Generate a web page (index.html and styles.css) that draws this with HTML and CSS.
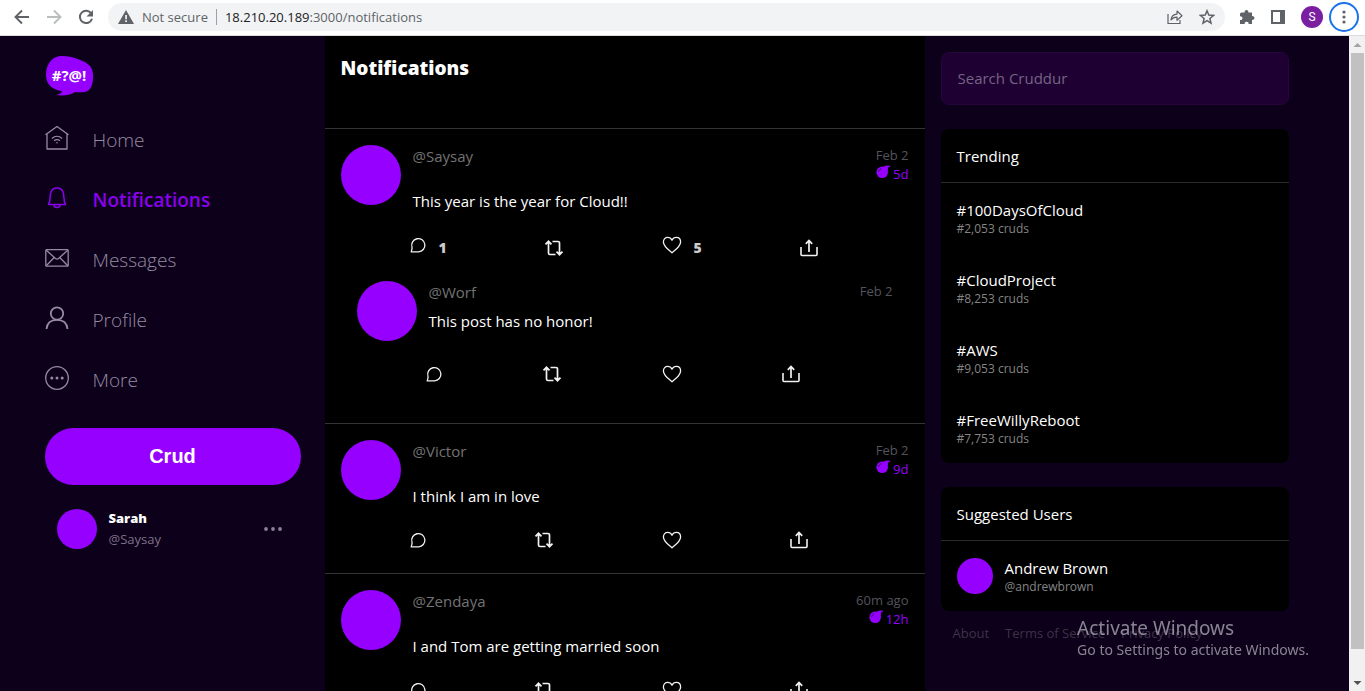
FILE: index.html
```html
<!DOCTYPE html>
<html lang="en">
<head>
<meta charset="utf-8">
<title>Cruddur</title>
<link rel="stylesheet" href="styles.css">
</head>
<body>
<svg class="sprite" aria-hidden="true">
  <symbol id="i-reply" viewBox="0 0 18 18"><path d="M2.200 15.800h7.300A6.600 6.600 0 1 0 3 11.200c.3 1.600-.1 3.200-.8 4.600z" fill="none" stroke="currentColor" stroke-width="1.300" stroke-linejoin="round"/></symbol>
  <symbol id="i-repost" viewBox="0 0 20 20"><path d="M1.500 6.300 4.500 3.300l3 3M4.500 3.500v11.500a1.500 1.500 0 0 0 1.500 1.500h5.500M8.500 3.500H14A1.500 1.500 0 0 1 15.500 5v11.500M12.500 13.700l3 3 3-3" fill="none" stroke="currentColor" stroke-width="1.700"/></symbol>
  <symbol id="i-heart" viewBox="0 0 20 20"><path d="M10 17.800C6.500 14.800 1.400 11.200 1.400 6.900c0-2.700 1.900-4.500 4.300-4.500 1.900 0 3.400 1 4.300 2.800.9-1.800 2.400-2.800 4.300-2.800 2.400 0 4.300 1.800 4.300 4.500 0 4.300-5.100 7.900-8.600 10.900z" fill="none" stroke="currentColor" stroke-width="1.300" stroke-linejoin="round"/></symbol>
  <symbol id="i-share" viewBox="0 0 20 20"><path d="M2 9v7.500a1 1 0 0 0 1 1h14a1 1 0 0 0 1-1V9" fill="none" stroke="currentColor" stroke-width="1.600"/><path d="M10 14V3M6.800 5.800 10 2.500l3.200 3.300" fill="none" stroke="currentColor" stroke-width="1.700"/></symbol>
  <symbol id="i-bomb" viewBox="0 0 14 14"><circle cx="6.200" cy="7.300" r="5.800" fill="currentColor"/><path d="M7.500 1.500 11 .5l3 .300-.4 1.400-1.700.1.100 3.700z" fill="currentColor"/><path d="M2.600 7C2.900 5.200 4 4.200 5.500 3.800" fill="none" stroke="#000" stroke-width=".6"/></symbol>
</svg>

<header class="browser">
  <button class="tool" aria-label="Back"><svg width="16" height="16" viewBox="0 0 16 16"><path d="M15 8H2M8 1.500 1.500 8 8 14.500" fill="none" stroke="#5f6368" stroke-width="1.900"/></svg></button>
  <button class="tool" aria-label="Forward"><svg width="16" height="16" viewBox="0 0 16 16"><path d="M1 8h13M8 1.500 14.500 8 8 14.500" fill="none" stroke="#babcbe" stroke-width="1.900"/></svg></button>
  <button class="tool" aria-label="Reload"><svg width="16" height="16" viewBox="0 0 16 16"><path d="M13.300 4.500A6.200 6.200 0 1 0 14 9.800" fill="none" stroke="#5f6368" stroke-width="2"/><path d="M15 1v6.500H8.500z" fill="#5f6368"/></svg></button>
  <div class="address">
    <svg width="16" height="14" viewBox="0 0 16 14"><path d="M8 0l8 14H0z" fill="#5f6368"/><path d="M7.200 5h1.700v4.200H7.200zM7.200 10.300h1.700V12H7.200z" fill="#f1f3f4"/></svg>
    <span class="secure">Not secure</span>
    <span class="url"><b class="host">18.210.20.189</b>:3000/notifications</span>
    <button class="tool" aria-label="Share this page"><svg width="16" height="16" viewBox="0 0 16 16"><path d="M1 5v9.500h12V11" fill="none" stroke="#5f6368" stroke-width="1.200"/><path d="M4 11c.4-4 2.500-5.700 6-5.900V2l5 4.700-5 4.600V8.200C7.500 8.100 5.500 9 4 11z" fill="none" stroke="#5f6368" stroke-width="1.200" stroke-linejoin="round"/></svg></button>
    <button class="tool" aria-label="Bookmark"><svg width="16" height="16" viewBox="0 0 16 16"><path d="M8 1.800l1.800 4.300 4.700.4-3.600 3 1.100 4.600L8 11.700l-4 2.400 1.100-4.600-3.600-3 4.700-.4z" fill="none" stroke="#5f6368" stroke-width="1.500"/></svg></button>
  </div>
  <button class="tool" aria-label="Extensions"><svg width="16" height="16" viewBox="0 0 16 16"><path d="M2.500 3.500h3.200a1.900 1.900 0 1 1 3.600 0H13v3.700a1.900 1.900 0 1 1 0 3.600V15H9.500a1.900 1.900 0 1 0-3.700 0H1v-4a1.900 1.900 0 1 0 0-3.600V5a1.500 1.500 0 0 1 1.500-1.500z" fill="#5f6368"/></svg></button>
  <button class="tool" aria-label="Side panel"><svg width="14" height="14" viewBox="0 0 14 14"><path d="M1 1h12v12H1z" fill="none" stroke="#5f6368" stroke-width="2"/><path d="M9 1h4v12H9z" fill="#5f6368"/></svg></button>
  <button class="account" aria-label="Account">S</button>
  <button class="menu" aria-label="Menu"><svg width="4" height="14" viewBox="0 0 4 14" fill="#5f6368"><circle cx="2" cy="2" r="1.600"/><circle cx="2" cy="7" r="1.600"/><circle cx="2" cy="12" r="1.600"/></svg></button>
</header>

<div class="viewport">
  <div class="page">
    <nav class="sidebar">
      <svg class="logo" width="50" height="42" viewBox="0 0 50 42" role="img" aria-label="Cruddur"><path d="M1 20C1 8 8 1 17 1c10 0 24 5 28 10 4 5 4 15 1 21-2 5-8 6-16 5-4 3-11 4-19 3 4-1 6-2 6-4C7 35 1 29 1 20z" fill="#9500ff"/><text x="24" y="26" class="logo-text">#?@!</text></svg>
      <div class="links">
        <a class="link" href="#"><svg width="24" height="26" viewBox="0 0 24 26" fill="none" stroke="currentColor" stroke-width="1.300"><path d="M.5 9.800 12 1.500l11.500 8.300M2 9v15h20V9" stroke-linejoin="round"/><path d="M7 13.500c3-2.800 7-2.800 10 0M9 15.800c2-1.600 4-1.600 6 0"/><circle cx="12" cy="17.700" r=".8" fill="currentColor" stroke="none"/></svg><span>Home</span></a>
        <a class="link link-active" href="#"><svg width="24" height="26" viewBox="0 0 24 26" fill="none" stroke="currentColor" stroke-width="1.500"><path d="M3.500 19.500C6 15 4.500 11 5.800 7.500 6.800 4.500 9 3 12 3s5.200 1.500 6.200 4.500c1.300 3.500-.2 7.500 2.300 12z" stroke-linejoin="round"/><path d="M9 20c0 3.200 6 3.200 6 0"/></svg><span>Notifications</span></a>
        <a class="link" href="#"><svg width="24" height="26" viewBox="0 0 24 26" fill="none" stroke="currentColor" stroke-width="1.300"><rect x=".8" y="4.700" width="22.400" height="16.500" rx="1"/><path d="M1 5l9.500 8.500c1 .8 2 .8 3 0L23 5M1 21l8.200-8.500M23 21l-8.200-8.500"/></svg><span>Messages</span></a>
        <a class="link" href="#"><svg width="24" height="26" viewBox="0 0 24 26" fill="none" stroke="currentColor" stroke-width="1.800"><circle cx="12" cy="8.500" r="6.200"/><path d="M1.500 24C2 18 6 14.800 12 14.800S22 18 22.500 24"/></svg><span>Profile</span></a>
        <a class="link" href="#"><svg width="24" height="26" viewBox="0 0 24 26" fill="none" stroke="currentColor" stroke-width="1.300"><circle cx="12" cy="13" r="11.300"/><g fill="currentColor" stroke="none"><circle cx="6.800" cy="13" r="1.500"/><circle cx="12" cy="13" r="1.500"/><circle cx="17.200" cy="13" r="1.500"/></g></svg><span>More</span></a>
      </div>
      <button class="crud">Crud</button>
      <div class="profile">
        <div class="avatar avatar-m"></div>
        <div class="who"><strong>Sarah</strong><span>@Saysay</span></div>
        <button class="more" aria-label="Account options"><svg width="20" height="6" viewBox="0 0 20 6" fill="#8b7f99"><circle cx="3" cy="3" r="1.900"/><circle cx="10" cy="3" r="1.900"/><circle cx="17" cy="3" r="1.900"/></svg></button>
      </div>
    </nav>

    <main class="feed">
      <h1 class="feed-title">Notifications</h1>

      <article class="activity">
        <div class="post">
          <div class="avatar"></div>
          <div class="body">
            <div class="meta"><a class="handle" href="#">@Saysay</a><div class="times"><span>Feb 2</span><span class="expires"><svg width="14" height="14"><use href="#i-bomb"/></svg>5d</span></div></div>
            <p class="message">This year is the year for Cloud!!</p>
          </div>
        </div>
        <div class="actions actions-counted">
          <button class="action counted" aria-label="Reply"><svg width="18" height="18"><use href="#i-reply"/></svg><span>1</span></button>
          <button class="action" aria-label="Repost"><svg width="20" height="20"><use href="#i-repost"/></svg></button>
          <button class="action counted" aria-label="Like"><svg width="20" height="20"><use href="#i-heart"/></svg><span>5</span></button>
          <button class="action" aria-label="Share"><svg width="20" height="20"><use href="#i-share"/></svg></button>
        </div>
        <div class="replies">
          <div class="post">
            <div class="avatar"></div>
            <div class="body">
              <div class="meta"><a class="handle" href="#">@Worf</a><div class="times"><span>Feb 2</span></div></div>
              <p class="message">This post has no honor!</p>
            </div>
          </div>
          <div class="actions">
            <button class="action" aria-label="Reply"><svg width="18" height="18"><use href="#i-reply"/></svg></button>
            <button class="action" aria-label="Repost"><svg width="20" height="20"><use href="#i-repost"/></svg></button>
            <button class="action" aria-label="Like"><svg width="20" height="20"><use href="#i-heart"/></svg></button>
            <button class="action" aria-label="Share"><svg width="20" height="20"><use href="#i-share"/></svg></button>
          </div>
        </div>
      </article>

      <article class="activity">
        <div class="post">
          <div class="avatar"></div>
          <div class="body">
            <div class="meta"><a class="handle" href="#">@Victor</a><div class="times"><span>Feb 2</span><span class="expires"><svg width="14" height="14"><use href="#i-bomb"/></svg>9d</span></div></div>
            <p class="message">I think I am in love</p>
          </div>
        </div>
        <div class="actions">
          <button class="action" aria-label="Reply"><svg width="18" height="18"><use href="#i-reply"/></svg></button>
          <button class="action" aria-label="Repost"><svg width="20" height="20"><use href="#i-repost"/></svg></button>
          <button class="action" aria-label="Like"><svg width="20" height="20"><use href="#i-heart"/></svg></button>
          <button class="action" aria-label="Share"><svg width="20" height="20"><use href="#i-share"/></svg></button>
        </div>
      </article>

      <article class="activity">
        <div class="post">
          <div class="avatar"></div>
          <div class="body">
            <div class="meta"><a class="handle" href="#">@Zendaya</a><div class="times"><span>60m ago</span><span class="expires"><svg width="14" height="14"><use href="#i-bomb"/></svg>12h</span></div></div>
            <p class="message">I and Tom are getting married soon</p>
          </div>
        </div>
        <div class="actions">
          <button class="action" aria-label="Reply"><svg width="18" height="18"><use href="#i-reply"/></svg></button>
          <button class="action" aria-label="Repost"><svg width="20" height="20"><use href="#i-repost"/></svg></button>
          <button class="action" aria-label="Like"><svg width="20" height="20"><use href="#i-heart"/></svg></button>
          <button class="action" aria-label="Share"><svg width="20" height="20"><use href="#i-share"/></svg></button>
        </div>
      </article>
    </main>

    <aside class="aside">
      <input class="search" type="text" placeholder="Search Cruddur" aria-label="Search Cruddur">
      <section class="card">
        <h2 class="card-title">Trending</h2>
        <a class="trend" href="#"><span>#100DaysOfCloud</span><small>#2,053 cruds</small></a>
        <a class="trend" href="#"><span>#CloudProject</span><small>#8,253 cruds</small></a>
        <a class="trend" href="#"><span>#AWS</span><small>#9,053 cruds</small></a>
        <a class="trend" href="#"><span>#FreeWillyReboot</span><small>#7,753 cruds</small></a>
      </section>
      <section class="card">
        <h2 class="card-title">Suggested Users</h2>
        <a class="user" href="#"><div class="avatar avatar-s"></div><div class="user-text"><span>Andrew Brown</span><small>@andrewbrown</small></div></a>
      </section>
      <footer class="legal"><a href="#">About</a><a href="#">Terms of Service</a><a href="#">Privacy Policy</a></footer>
    </aside>
  </div>

  <div class="scrollbar" aria-hidden="true">
    <svg width="16" height="17" viewBox="0 0 16 17"><path d="M8.500 7l4 4h-8z" fill="#a3a3a3"/></svg>
    <div class="track"><div class="thumb"></div></div>
    <svg width="16" height="17" viewBox="0 0 16 17"><path d="M8.500 11l-4-4h8z" fill="#505050"/></svg>
  </div>
</div>

<div class="watermark"><div class="watermark-title">Activate Windows</div><div>Go to Settings to activate Windows.</div></div>
</body>
</html>
```
FILE: styles.css
```css
* { box-sizing: border-box; }
body {
  margin: 0;
  height: 100vh;
  display: flex;
  flex-direction: column;
  overflow: hidden;
  background: #0d001a;
  color: #fff;
  font: 400 15px/22px "Open Sans", "Noto Sans", sans-serif;
}
button { border: 0; padding: 0; background: none; color: inherit; font: inherit; cursor: pointer; }
a { color: inherit; text-decoration: none; }
svg { display: block; flex: none; }
.sprite { position: absolute; width: 0; height: 0; }

.browser {
  flex: none;
  display: flex;
  align-items: center;
  gap: 16px;
  height: 36px;
  padding: 0 6px 2px 14px;
  background: #fff;
  border-bottom: 1px solid #dadce0;
}
.tool { flex: none; }
.address {
  flex: 1;
  display: flex;
  align-items: center;
  height: 28px;
  gap: 8px;
  margin: 0 -2px;
  padding: 0 10px;
  border-radius: 14px;
  background: #f1f3f4;
  color: #5f6368;
  font-size: 13px;
  line-height: 16px;
}
.secure { padding-right: 8px; border-right: 1px solid #9aa0a6; }
.url { flex: 1; }
.host { color: #202124; font-weight: 400; }
.address .tool + .tool { margin-left: 8px; }
.account {
  width: 22px;
  height: 22px;
  margin-right: -10px;
  border-radius: 50%;
  background: #7b1fa2;
  color: #fff;
  font: 12px/22px Roboto, sans-serif;
}
.menu {
  display: grid;
  place-items: center;
  width: 30px;
  height: 30px;
  border: 2px solid #1a73e8;
  border-radius: 50%;
}

.viewport { flex: 1; min-height: 0; display: flex; }
.page {
  flex: 1;
  min-width: 0;
  display: flex;
  justify-content: center;
  overflow: hidden;
}
.avatar { flex: none; width: 60px; height: 60px; border-radius: 50%; background: #9500ff; }
.avatar-m { width: 40px; height: 40px; }
.avatar-s { width: 36px; height: 36px; }

.sidebar { width: 280px; padding: 19px 24px 0 0; }
.logo-text { fill: #fff; font: 700 15px "Open Sans", sans-serif; text-anchor: middle; }
.links { padding: 11px 0 20px; }
.link {
  display: flex;
  align-items: center;
  gap: 24px;
  height: 60px;
  color: #968ba3;
  font-size: 19px;
  font-weight: 300;
}
.link span { padding-top: 3px; }
.link-active { color: #8a00ee; font-weight: 600; }
.crud {
  width: 100%;
  height: 57px;
  border-radius: 29px;
  background: #9500ff;
  font: 700 20px "Liberation Sans", Arial, sans-serif;
}
.profile { display: flex; align-items: center; gap: 12px; padding: 23px 18px 0 12px; }
.who { flex: 1; display: flex; flex-direction: column; font-size: 13px; line-height: 21px; }
.who strong { font-weight: 800; }
.who span { color: #7d7189; }

.feed { width: 600px; align-self: flex-start; background: #000; }
.feed-title { height: 92px; margin: 0; padding: 20px 16px; font-size: 19px; font-weight: 800; line-height: 24px; }
.activity { padding: 16px; border-top: 1px solid #333338; }
.post { display: flex; gap: 12px; margin-bottom: 16px; }
.body { flex: 1; }
.meta { display: flex; justify-content: space-between; margin-bottom: 7px; }
.handle { color: #737373; line-height: 23px; }
.times { display: flex; flex-direction: column; align-items: flex-end; color: #53535e; font-size: 13px; line-height: 20px; }
.expires { display: flex; gap: 3px; color: #9500ff; line-height: 19px; }
.message { margin: 0; line-height: 21px; }
.actions { display: flex; min-height: 34px; margin-left: 60px; }
.actions-counted { min-height: 40px; }
.action { flex: 1 1 auto; display: flex; align-items: center; gap: 12px; padding: 0 8px; color: #f2f2f2; }
.counted { color: #ccc; font-size: 14px; font-weight: 800; }
.counted svg { margin-bottom: 6px; color: #f2f2f2; }
.replies { padding: 13px 16px 16px; }

.aside { width: 380px; display: flex; flex-direction: column; padding: 16px; }
.search {
  height: 53px;
  margin-bottom: 24px;
  padding: 0 16px 2px;
  border: 1px solid #26063a;
  border-radius: 8px;
  background: #1f0033;
  color: #fff;
  font: inherit;
}
.search::placeholder { color: #736583; opacity: 1; }
.card { margin-bottom: 24px; border-radius: 8px; background: #000; }
.card-title { margin: 0; padding: 16px 16px 15px; border-bottom: 1px solid #2b2b2b; font-size: 15px; font-weight: inherit; line-height: 22px; }
.trend { display: flex; flex-direction: column; padding: 16px; }
.user-text { display: flex; flex-direction: column; }
.aside small { color: #858585; font-size: 12px; line-height: 16px; }
.user { display: flex; align-items: center; gap: 12px; padding: 16px; }
.legal { display: flex; gap: 16px; margin-top: -12px; padding: 0 12px; color: #3c3346; font-size: 13px; line-height: 20px; }

.scrollbar { flex: none; display: flex; flex-direction: column; width: 16px; background: #f1f1f1; }
.track { flex: 1; padding: 0 1px 0 2px; }
.thumb { height: 96%; background: #c1c1c1; }

.watermark {
  position: fixed;
  right: 56px;
  bottom: 30px;
  color: rgba(190, 186, 196, .7);
  font: 400 14px/22px "Noto Sans", sans-serif;
}
.watermark-title { font-size: 19px; }
```
